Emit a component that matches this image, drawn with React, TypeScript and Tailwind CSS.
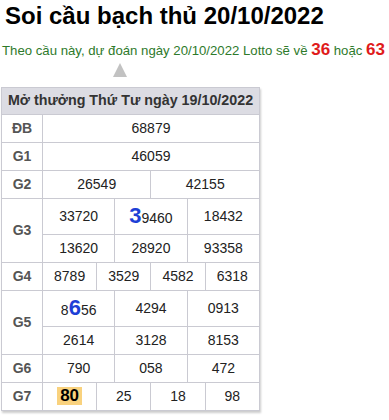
import React from 'react';

const font = { fontFamily: '"Liberation Sans", Arial, sans-serif' };

function Big({ d, rest, pre }: { d: string; rest: string; pre?: string }) {
  return (
    <span>
      {pre}
      <span className="text-[22px] font-bold text-[#1d3fd6] leading-none">{d}</span>
      {rest}
    </span>
  );
}

function Label({ children, rows = 1 }: { children: React.ReactNode; rows?: number }) {
  return (
    <td rowSpan={rows} className="border border-[#cacad2] text-center font-bold text-[14px] text-[#555]">
      {children}
    </td>
  );
}

function Num({ children, span, tall }: { children: React.ReactNode; span: number; tall?: boolean }) {
  return (
    <td colSpan={span} className={`border border-[#cacad2] text-center text-[14px] text-[#222] ${tall ? 'h-[36px]' : 'h-[28px]'}`}>
      {children}
    </td>
  );
}

export default function App() {
  return (
    <div className="bg-white w-[389px] h-[420px] overflow-hidden" style={font}>
      <h1 className="pl-[5px] text-[24px] font-bold leading-[32px] text-black">Soi cầu bạch thủ 20/10/2022</h1>
      <p className="mt-[8px] pl-[2px] text-[13.2px] leading-[20px] text-[#2e7a2b] whitespace-nowrap">
        Theo cầu này, dự đoán ngày 20/10/2022 Lotto sẽ về{' '}
        <span className="text-[17px] font-bold text-[#e01b1b]">36</span> hoặc{' '}
        <span className="text-[17px] font-bold text-[#e01b1b]">63</span>
      </p>
      <div className="ml-[113px] mt-[2px] w-0 h-0 border-l-[7px] border-r-[7px] border-b-[14px] border-l-transparent border-r-transparent border-b-[#c2c2c2]" />
      <div className="ml-[1px] mt-[10px] w-[259px] shadow-[1px_2px_2px_rgba(0,0,0,0.2)]">
        <table className="w-[259px] border-collapse table-fixed">
          <colgroup>
            <col className="w-[41px]" />
            {Array.from({ length: 12 }).map((_, i) => (
              <col key={i} />
            ))}
          </colgroup>
          <tbody>
            <tr>
              <td colSpan={13} className="border border-[#cacad2] bg-[#dcdce3] h-[27px] text-center font-bold text-[14.3px] text-[#333]">
                Mở thưởng Thứ Tư ngày 19/10/2022
              </td>
            </tr>
            <tr>
              <Label>ĐB</Label>
              <Num span={12}>68879</Num>
            </tr>
            <tr>
              <Label>G1</Label>
              <Num span={12}>46059</Num>
            </tr>
            <tr>
              <Label>G2</Label>
              <Num span={6}>26549</Num>
              <Num span={6}>42155</Num>
            </tr>
            <tr>
              <Label rows={2}>G3</Label>
              <Num span={4} tall>33720</Num>
              <Num span={4} tall><Big d="3" rest="9460" /></Num>
              <Num span={4} tall>18432</Num>
            </tr>
            <tr>
              <Num span={4}>13620</Num>
              <Num span={4}>28920</Num>
              <Num span={4}>93358</Num>
            </tr>
            <tr>
              <Label>G4</Label>
              <Num span={3}>8789</Num>
              <Num span={3}>3529</Num>
              <Num span={3}>4582</Num>
              <Num span={3}>6318</Num>
            </tr>
            <tr>
              <Label rows={2}>G5</Label>
              <Num span={4} tall><Big pre="8" d="6" rest="56" /></Num>
              <Num span={4} tall>4294</Num>
              <Num span={4} tall>0913</Num>
            </tr>
            <tr>
              <Num span={4}>2614</Num>
              <Num span={4}>3128</Num>
              <Num span={4}>8153</Num>
            </tr>
            <tr>
              <Label>G6</Label>
              <Num span={4}>790</Num>
              <Num span={4}>058</Num>
              <Num span={4}>472</Num>
            </tr>
            <tr>
              <Label>G7</Label>
              <Num span={3}>
                <span className="inline-block bg-[#f9d27e] px-[3px] text-[17px] font-bold leading-[18px] text-black">80</span>
              </Num>
              <Num span={3}>25</Num>
              <Num span={3}>18</Num>
              <Num span={3}>98</Num>
            </tr>
          </tbody>
        </table>
      </div>
    </div>
  );
}
